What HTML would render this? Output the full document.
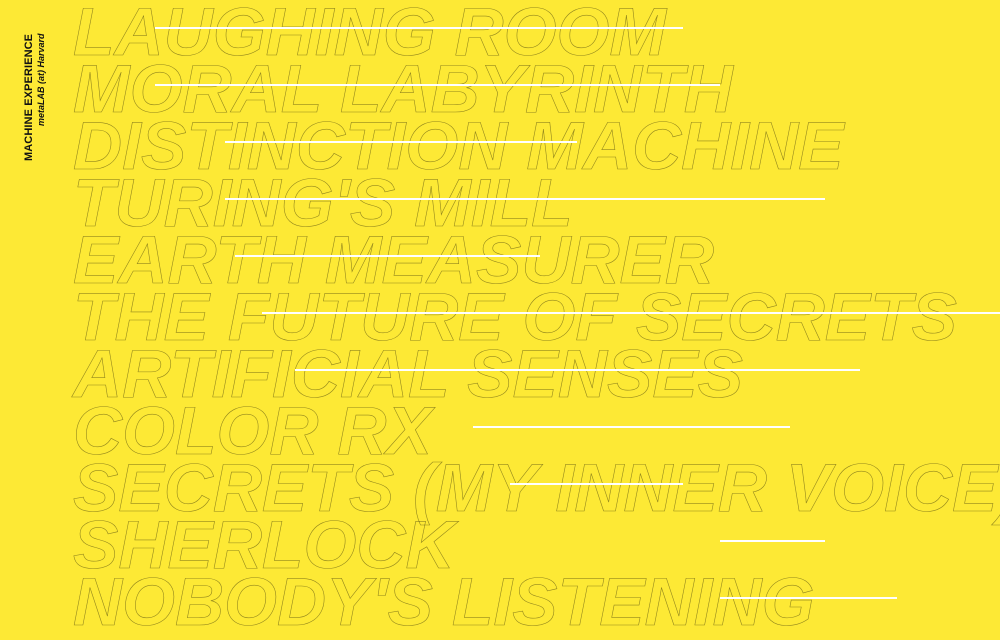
<!DOCTYPE html>
<html><head><style>
html,body{margin:0;padding:0}
body{width:1000px;height:625px;background:#fde935;position:relative;overflow:hidden;font-family:"Liberation Sans",sans-serif}
.titles{position:absolute;left:73px;top:4px;margin:0;padding:0;list-style:none;font-weight:bold;font-style:italic;font-size:68px;line-height:57px;white-space:nowrap;color:transparent;-webkit-text-stroke:0.6px rgba(60,55,10,0.55)}
.ln{position:absolute;height:1.5px;background:#fff}
.side{position:absolute;left:23px;top:161px;transform:rotate(-90deg);transform-origin:0 0;white-space:nowrap;color:#111}
.side b{display:block;font-size:11px;line-height:13px;font-weight:bold;letter-spacing:0.1px}
.side i{display:block;font-size:9px;line-height:11px;font-weight:bold;padding-left:35px}
</style></head><body>
<div class="side"><b>MACHINE EXPERIENCE</b><i>metaLAB (at) Harvard</i></div>
<ul class="titles">
<li>LAUGHING ROOM</li>
<li>MORAL LABYRINTH</li>
<li>DISTINCTION MACHINE</li>
<li>TURING'S MILL</li>
<li>EARTH MEASURER</li>
<li>THE FUTURE OF SECRETS</li>
<li>ARTIFICIAL SENSES</li>
<li>COLOR RX</li>
<li>SECRETS (MY INNER VOICE)</li>
<li>SHERLOCK</li>
<li>NOBODY'S LISTENING</li>
</ul>
<div class="ln" style="left:155px;width:528px;top:27px"></div>
<div class="ln" style="left:155px;width:565px;top:84px"></div>
<div class="ln" style="left:225px;width:352px;top:141px"></div>
<div class="ln" style="left:225px;width:600px;top:198px"></div>
<div class="ln" style="left:235px;width:305px;top:255px"></div>
<div class="ln" style="left:262px;width:738px;top:312px"></div>
<div class="ln" style="left:295px;width:565px;top:369px"></div>
<div class="ln" style="left:473px;width:317px;top:426px"></div>
<div class="ln" style="left:510px;width:173px;top:483px"></div>
<div class="ln" style="left:720px;width:105px;top:540px"></div>
<div class="ln" style="left:720px;width:177px;top:597px"></div>
</body></html>
